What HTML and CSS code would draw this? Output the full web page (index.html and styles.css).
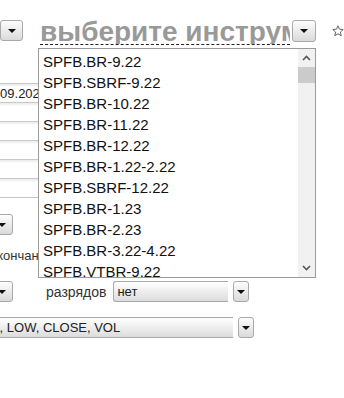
FILE: index.html
```html
<!DOCTYPE html>
<html>
<head>
  <link rel="stylesheet" href="styles.css">
</head>
<body>
  <div class="page">
    <div class="top">
      <div class="cb-btn cb-btn-top"></div>
      <div class="search">
        <input class="search-input" type="text" placeholder="выберите инструмент">
        <div class="list">
          <div class="list-items">
            <div class="item">SPFB.BR-9.22</div>
            <div class="item">SPFB.SBRF-9.22</div>
            <div class="item">SPFB.BR-10.22</div>
            <div class="item">SPFB.BR-11.22</div>
            <div class="item">SPFB.BR-12.22</div>
            <div class="item">SPFB.BR-1.22-2.22</div>
            <div class="item">SPFB.SBRF-12.22</div>
            <div class="item">SPFB.BR-1.23</div>
            <div class="item">SPFB.BR-2.23</div>
            <div class="item">SPFB.BR-3.22-4.22</div>
            <div class="item">SPFB.VTBR-9.22</div>
            <div class="item">SPFB.VTBR-12.22</div>
          </div>
          <div class="scrollbar">
            <svg class="chev" width="9" height="6" viewBox="0 0 9 6"><polyline points="1,5 4.5,1.5 8,5" fill="none" stroke="#555" stroke-width="1.6"/></svg>
            <div class="thumb"></div>
            <div class="track"></div>
            <svg class="chev" width="9" height="6" viewBox="0 0 9 6"><polyline points="1,1 4.5,4.5 8,1" fill="none" stroke="#555" stroke-width="1.6"/></svg>
          </div>
        </div>
      </div>
      <div class="cb-btn cb-btn-search"></div>
      <svg class="star" width="14" height="14" viewBox="0 0 24 24">
        <polygon points="12,1.5 15,8.4 22.5,9.1 16.8,14 18.5,21.5 12,17.6 5.5,21.5 7.2,14 1.5,9.1 9,8.4" fill="none" stroke="#666" stroke-width="2" stroke-linejoin="round"/>
      </svg>
    </div>

    <div class="form">
      <div class="dates">
        <input class="field" type="text" value="13.09.2022">
        <input class="field" type="text">
        <input class="field" type="text">
        <input class="field" type="text">
        <input class="field" type="text">
        <input class="field" type="text">
      </div>

      <div class="combo combo-period">
        <div class="cb-btn"></div>
      </div>

      <div class="label label-end">окончание</div>

      <div class="row">
        <div class="combo combo-format">
          <div class="cb-btn"></div>
        </div>
        <span class="label label-digits">разрядов</span>
        <div class="combo combo-digits">
          <div class="cb-field">нет</div>
          <div class="cb-btn"></div>
        </div>
      </div>

      <div class="combo combo-cols">
        <div class="cb-field">OPEN, HIGH, LOW, CLOSE, VOL</div>
        <div class="cb-btn"></div>
      </div>
    </div>
  </div>
</body>
</html>
```

FILE: styles.css
```css
body {
  margin: 0;
  font-family: "Liberation Sans", Arial, sans-serif;
  font-size: 13px;
  color: #333;
  overflow: hidden;
}
.page {
  width: 344px;
  height: 398px;
  overflow: hidden;
}

/* верхняя строка: поиск инструмента */
.top {
  display: flex;
  align-items: flex-start;
  padding-top: 20px;
  height: 26px;
}
.cb-btn {
  position: relative;
  box-sizing: border-box;
  height: 21px;
  border: 1px solid #a9a9a9;
  border-radius: 3px;
  background: linear-gradient(#fdfdfd, #dadada);
  flex-shrink: 0;
}
.cb-btn::after {
  content: "";
  position: absolute;
  left: 50%;
  top: 50%;
  margin: -2px 0 0 -4px;
  border-left: 4px solid transparent;
  border-right: 4px solid transparent;
  border-top: 4px solid #111;
}
.cb-btn-top {
  width: 23px;
}
.search {
  position: relative;
  width: 250px;
  margin-left: 17px;
}
.search-input {
  box-sizing: border-box;
  width: 250px;
  height: 25px;
  padding: 0;
  border: none;
  border-bottom: 1px dashed #222;
  font-family: "Liberation Sans", Arial, sans-serif;
  font-size: 28px;
  font-weight: bold;
  line-height: 24px;
  color: #999;
  outline: none;
}
.search-input::placeholder {
  color: #999;
  font-weight: bold;
}
.cb-btn-search {
  width: 24px;
  height: 22px;
  margin-left: 2px;
}
.star {
  margin: 4px 0 0 16px;
}

/* выпадающий список инструментов */
.list {
  position: absolute;
  top: 28px;
  left: -2px;
  z-index: 2;
  box-sizing: border-box;
  width: 278px;
  height: 230px;
  border: 1px solid #9a9a9a;
  background: #fff;
  display: flex;
  overflow: hidden;
}
.list-items {
  flex: 1;
  padding-top: 2px;
}
.item {
  height: 21px;
  line-height: 21px;
  padding-left: 4px;
  font-size: 15px;
  color: #111;
  white-space: nowrap;
}
.scrollbar {
  width: 17px;
  background: #f1f1f1;
  display: flex;
  flex-direction: column;
  align-items: center;
}
.chev {
  margin: 6px 0;
}
.thumb {
  width: 17px;
  height: 16px;
  background: #cbcbcb;
}
.track {
  flex: 1;
}

/* форма слева */
.form {
  padding-top: 37px;
}
.dates {
  display: flex;
  flex-direction: column;
  margin-left: -22px;
}
.field {
  box-sizing: border-box;
  width: 90px;
  height: 20px;
  margin-top: -1px;
  padding: 0 3px;
  border: 1px solid #c8c8c8;
  box-shadow: inset 0 2px 2px #eee;
  font-family: "Liberation Sans", Arial, sans-serif;
  font-size: 13px;
  color: #222;
}
.field:first-child {
  margin-top: 0;
}
.combo {
  display: flex;
  align-items: center;
}
.combo-period {
  margin: 16px 0 0 -10px;
}
.combo-period .cb-btn,
.combo-format .cb-btn {
  width: 23px;
}
.label-end {
  margin: 13px 0 0 -10px;
  line-height: 16px;
  white-space: nowrap;
}
.row {
  display: flex;
  align-items: center;
  margin-top: 17px;
}
.combo-format {
  margin-left: -10px;
}
.label-digits {
  margin-left: 33px;
  font-size: 14px;
}
.cb-field {
  box-sizing: border-box;
  height: 21px;
  line-height: 19px;
  padding-left: 3px;
  border: 1px solid #a9a9a9;
  border-right: none;
  border-radius: 3px 0 0 3px;
  background: linear-gradient(#fff, #dcdcdc);
  color: #222;
  white-space: nowrap;
  overflow: hidden;
}
.combo-digits {
  margin-left: 7px;
}
.combo-digits .cb-field {
  width: 115px;
}
.combo-digits .cb-btn,
.combo-cols .cb-btn {
  width: 16px;
  margin-left: 5px;
}
.combo-cols {
  margin: 15px 0 0 -81px;
}
.combo-cols .cb-field {
  width: 314px;
}
```
